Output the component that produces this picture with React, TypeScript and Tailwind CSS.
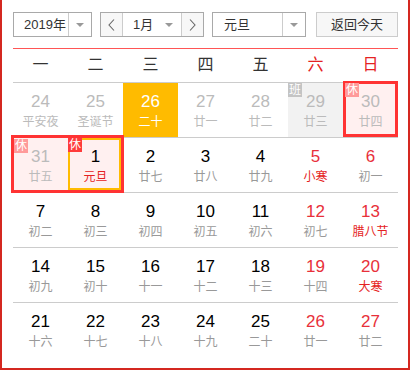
import React from "react";

type Day = {
  d: number;
  l: string;
  other?: boolean;   // belongs to previous month
  weekend?: boolean;
  fest?: boolean;    // festival / solar term shown in red
  today?: boolean;
  work?: boolean;    // 班
  rest?: boolean;    // 休
  pink?: boolean;
  selected?: boolean;
  badgePos?: string;
};

const WEEK = ["一", "二", "三", "四", "五", "六", "日"];

const ROWS: Day[][] = [
  [
    { d: 24, l: "平安夜", other: true },
    { d: 25, l: "圣诞节", other: true },
    { d: 26, l: "二十", other: true, today: true },
    { d: 27, l: "廿一", other: true },
    { d: 28, l: "廿二", other: true },
    { d: 29, l: "廿三", other: true, work: true, badgePos: "left-0 top-0" },
    { d: 30, l: "廿四", other: true, rest: true, pink: true, badgePos: "left-[2px] top-0" },
  ],
  [
    { d: 31, l: "廿五", other: true, rest: true, pink: true, badgePos: "left-px top-px" },
    { d: 1, l: "元旦", fest: true, rest: true, pink: true, selected: true, badgePos: "left-0 top-0" },
    { d: 2, l: "廿七" },
    { d: 3, l: "廿八" },
    { d: 4, l: "廿九" },
    { d: 5, l: "小寒", weekend: true, fest: true },
    { d: 6, l: "初一", weekend: true },
  ],
  [
    { d: 7, l: "初二" },
    { d: 8, l: "初三" },
    { d: 9, l: "初四" },
    { d: 10, l: "初五" },
    { d: 11, l: "初六" },
    { d: 12, l: "初七", weekend: true },
    { d: 13, l: "腊八节", weekend: true, fest: true },
  ],
  [
    { d: 14, l: "初九" },
    { d: 15, l: "初十" },
    { d: 16, l: "十一" },
    { d: 17, l: "十二" },
    { d: 18, l: "十三" },
    { d: 19, l: "十四", weekend: true },
    { d: 20, l: "大寒", weekend: true, fest: true },
  ],
  [
    { d: 21, l: "十六" },
    { d: 22, l: "十七" },
    { d: 23, l: "十八" },
    { d: 24, l: "十九" },
    { d: 25, l: "二十" },
    { d: 26, l: "廿一", weekend: true },
    { d: 27, l: "廿二", weekend: true },
  ],
];

const Caret = () => (
  <span className="block w-0 h-0 border-x-[4px] border-x-transparent border-t-[4px] border-t-[#999]" />
);

const Chevron = ({ dir }: { dir: "l" | "r" }) => (
  <svg width="7" height="12" viewBox="0 0 7 12" fill="none">
    <polyline
      points={dir === "l" ? "6,0.5 1,6 6,11.5" : "1,0.5 6,6 1,11.5"}
      stroke="#666"
      strokeWidth="1.1"
    />
  </svg>
);

function Cell({ day }: { day: Day }) {
  let bg = "";
  if (day.today) bg = "bg-[#ffbb00]";
  else if (day.pink) bg = "bg-[#fff0f0]";
  else if (day.work) bg = "bg-[#f2f2f2]";

  let numColor = "text-black";
  let lunarColor = "text-[#999]";
  if (day.today) {
    numColor = "text-white";
    lunarColor = "text-white";
  } else if (day.other) {
    numColor = "text-[#bbb]";
    lunarColor = "text-[#bbb]";
  } else {
    if (day.weekend) numColor = "text-[#e8303a]";
    if (day.fest) lunarColor = "text-[#e52222]";
  }

  return (
    <div className={`relative flex flex-col items-center pt-[9px] ${bg}`}>
      {day.selected && (
        <div className="absolute left-0 top-0 w-[53px] h-[52px] border-2 border-[#ffbb00]" />
      )}
      {(day.work || day.rest) && (
        <span
          className={`absolute ${day.badgePos} z-20 w-[14px] h-[14px] flex items-center justify-center text-[12px] leading-none text-white ${
            day.work ? "bg-[#c4c4c4]" : day.other ? "bg-[#ff9a9a]" : "bg-[#ff3b3b]"
          }`}
        >
          {day.work ? "班" : "休"}
        </span>
      )}
      <span className={`text-[17px] leading-[20px] ${numColor}`}>{day.d}</span>
      <span className={`mt-[2px] text-[12px] leading-[16px] ${lunarColor}`}>{day.l}</span>
    </div>
  );
}

export default function App() {
  return (
    <div className="w-[410px] h-[370px] bg-white border-x-2 border-b-2 border-[#d42820] pl-[11px] pr-[10px] pt-[12px] font-['Liberation_Sans','Noto_Sans_CJK_SC',sans-serif]">
      {/* Toolbar */}
      <div className="flex items-center h-[25px] text-[13px] text-[#333]">
        <div className="flex w-[79px] h-full border border-[#a9a9a9]">
          <div className="flex-1 flex items-center pl-[10px]">2019年</div>
          <div className="w-[23px] flex items-center justify-center border-l border-[#ccc]">
            <Caret />
          </div>
        </div>

        <div className="ml-[8px] flex w-[104px] h-full border border-[#a9a9a9]">
          <div className="w-[22px] flex items-center justify-center bg-[#f7f7f7] border-r border-[#ccc]">
            <Chevron dir="l" />
          </div>
          <div className="flex-1 flex items-center justify-between pl-[10px] pr-[8px]">
            <span>1月</span>
            <Caret />
          </div>
          <div className="w-[22px] flex items-center justify-center bg-[#f7f7f7] border-l border-[#ccc]">
            <Chevron dir="r" />
          </div>
        </div>

        <div className="ml-[8px] flex w-[94px] h-full border border-[#a9a9a9]">
          <div className="flex-1 flex items-center pl-[11px]">元旦</div>
          <div className="w-[23px] flex items-center justify-center border-l border-[#ccc]">
            <Caret />
          </div>
        </div>

        <button className="ml-[10px] w-[82px] h-full bg-[#f7f7f7] border border-[#ccc] text-[13px] text-[#333]">
          返回今天
        </button>
      </div>

      <div className="mt-[11px] h-px bg-[#f55]" />

      {/* Weekday header */}
      <div className="grid grid-cols-7 h-[34px] border-b border-[#ccc] text-[16px]">
        {WEEK.map((w, i) => (
          <div
            key={w}
            className={`flex items-center justify-center pb-[2px] ${i >= 5 ? "text-[#e52222]" : "text-[#333]"}`}
          >
            {w}
          </div>
        ))}
      </div>

      {/* Day rows */}
      {ROWS.map((row, r) => (
        <div
          key={r}
          className={`relative grid grid-cols-7 h-[55px] ${r < ROWS.length - 1 ? "border-b border-[#ccc]" : ""}`}
        >
          {row.map((day, i) => (
            <Cell key={i} day={day} />
          ))}
          {r === 0 && (
            <div className="absolute left-[330px] top-[-2px] w-[55px] h-[56px] border-[3px] border-[#ff3333] z-10 pointer-events-none" />
          )}
          {r === 1 && (
            <div className="absolute left-[-2px] top-[-3px] w-[113px] h-[58px] border-[3px] border-[#ff3333] z-10 pointer-events-none" />
          )}
        </div>
      ))}
    </div>
  );
}
